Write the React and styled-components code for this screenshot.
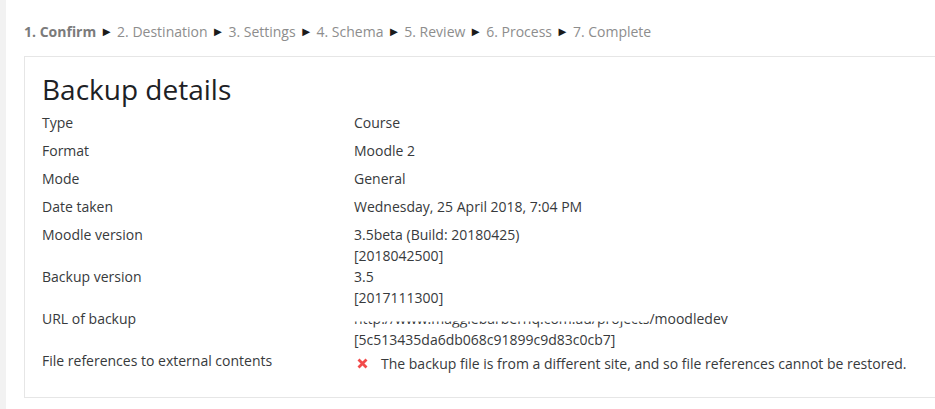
import React from 'react';
import styled, { createGlobalStyle } from 'styled-components';

const GlobalStyle = createGlobalStyle`
  body {
    margin: 0;
    background: #fff;
    font-family: "Open Sans", "Liberation Sans", sans-serif;
    font-size: 14px;
    line-height: 1.5;
    color: #373a3c;
  }
`;

const Page = styled.div`
  display: flex;
  width: 935px;
  height: 409px;
  overflow: hidden;
`;

const Strip = styled.div`
  flex: 0 0 6px;
  background: #f2f2f2;
`;

const Main = styled.div`
  flex: 1;
  padding: 21px 0 0 18px;
`;

const Steps = styled.div`
  display: flex;
  align-items: center;
  color: #8d8d8d;
  white-space: nowrap;
`;

const Step = styled.span`
  font-weight: ${(p) => (p.$current ? 700 : 400)};
  color: ${(p) => (p.$current ? '#7b7b7b' : '#8d8d8d')};
`;

const Arrow = styled.span`
  color: #1b1b1b;
  font-size: 13px;
  margin: 0 4px 0 4px;
`;

const Card = styled.div`
  margin-top: 14px;
  width: 960px;
  border: 1px solid #e6e6e6;
  padding: 16px 17px 19px 17px;
`;

const Heading = styled.h2`
  margin: 0 0 5px;
  font-size: 28px;
  font-weight: 400;
  line-height: 1.2;
  color: #1d2125;
`;

const Row = styled.div`
  display: flex;
`;

const Label = styled.div`
  flex: 0 0 312px;
  margin-bottom: 7px;
`;

const Value = styled.div`
  display: flex;
  flex-direction: column;
`;

const Redacted = styled.span`
  clip-path: inset(68% 0 0 0);
`;

const Warning = styled.div`
  display: flex;
  align-items: center;
  gap: 13px;
`;

const Cross = () => (
  <svg width="11" height="11" viewBox="0 0 11 11" style={{ marginLeft: 3 }}>
    <path d="M1.5 1.5 L9.5 9.5 M9.5 1.5 L1.5 9.5" stroke="#f24b4b" strokeWidth="2.8" strokeLinecap="butt" />
  </svg>
);

const steps = ['1. Confirm', '2. Destination', '3. Settings', '4. Schema', '5. Review', '6. Process', '7. Complete'];

const details = [
  ['Type', ['Course']],
  ['Format', ['Moodle 2']],
  ['Mode', ['General']],
  ['Date taken', ['Wednesday, 25 April 2018, 7:04 PM']],
  ['Moodle version', ['3.5beta (Build: 20180425)', '[2018042500]']],
  ['Backup version', ['3.5', '[2017111300]']],
];

export default function App() {
  return (
    <>
      <GlobalStyle />
      <Page>
        <Strip />
        <Main>
          <Steps>
            {steps.map((s, i) => (
              <React.Fragment key={s}>
                <Step $current={i === 0}>{s}</Step>
                {i < steps.length - 1 && <Arrow>►</Arrow>}
              </React.Fragment>
            ))}
          </Steps>
          <Card>
            <Heading>Backup details</Heading>
            {details.map(([label, lines]) => (
              <Row key={label}>
                <Label>{label}</Label>
                <Value>
                  {lines.map((l) => (
                    <span key={l}>{l}</span>
                  ))}
                </Value>
              </Row>
            ))}
            <Row>
              <Label>URL of backup</Label>
              <Value>
                <span>
                  <Redacted>http://www.maggiebarberhq.com.au/projects</Redacted>/moodledev
                </span>
                <span>[5c513435da6db068c91899c9d83c0cb7]</span>
              </Value>
            </Row>
            <Row>
              <Label>File references to external contents</Label>
              <Warning>
                <Cross />
                <span>The backup file is from a different site, and so file references cannot be restored.</span>
              </Warning>
            </Row>
          </Card>
        </Main>
      </Page>
    </>
  );
}
